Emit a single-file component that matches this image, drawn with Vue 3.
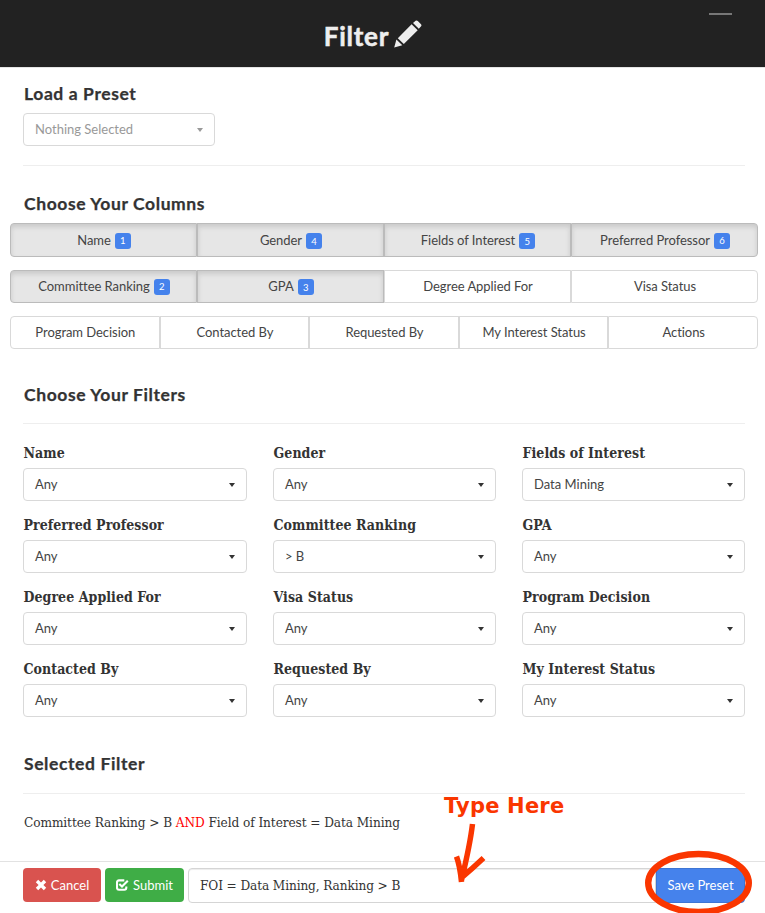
<script setup>
const rows = [
  [
    { label: 'Name', order: 1 },
    { label: 'Gender', order: 4 },
    { label: 'Fields of Interest', order: 5 },
    { label: 'Preferred Professor', order: 6 },
  ],
  [
    { label: 'Committee Ranking', order: 2 },
    { label: 'GPA', order: 3 },
    { label: 'Degree Applied For' },
    { label: 'Visa Status' },
  ],
  [
    { label: 'Program Decision' },
    { label: 'Contacted By' },
    { label: 'Requested By' },
    { label: 'My Interest Status' },
    { label: 'Actions' },
  ],
]
const filters = [
  ['Name', 'Any'], ['Gender', 'Any'], ['Fields of Interest', 'Data Mining'],
  ['Preferred Professor', 'Any'], ['Committee Ranking', '> B'], ['GPA', 'Any'],
  ['Degree Applied For', 'Any'], ['Visa Status', 'Any'], ['Program Decision', 'Any'],
  ['Contacted By', 'Any'], ['Requested By', 'Any'], ['My Interest Status', 'Any'],
]
</script>

<template>
  <div class="page">
    <header class="top">
      <h1>Filter</h1>
      <svg class="pencil" width="28" height="28" viewBox="0 0 28 28">
        <path d="M0.2 27.4 2.4 19.4 8.3 25.2ZM3.8 18.2 17.6 4.2 23.7 10.2 9.8 24ZM19 3.1 21.6 0.8Q22.8 0 23.8 1L27 4.3Q28 5.3 27.1 6.3L24.8 8.8Z" />
      </svg>
      <span class="minimize"></span>
    </header>

    <main>
      <section class="preset">
        <h4>Load a Preset</h4>
        <button class="select muted"><span>Nothing Selected</span><i class="caret"></i></button>
      </section>
      <hr>

      <h4 class="columns-title">Choose Your Columns</h4>
      <div class="groups">
        <div v-for="(row, i) in rows" :key="i" class="group" :class="{ first: i === 0 }">
          <button v-for="c in row" :key="c.label" :class="{ active: c.order }">
            <span>{{ c.label }}</span>
            <b v-if="c.order" :class="{ low: c.order > 2 && c.order < 6 }">{{ c.order }}</b>
          </button>
        </div>
      </div>

      <h4 class="filters-title">Choose Your Filters</h4>
      <hr>
      <div class="filters">
        <div v-for="f in filters" :key="f[0]" class="field">
          <label>{{ f[0] }}</label>
          <button class="select"><span>{{ f[1] }}</span><i class="caret"></i></button>
        </div>
      </div>

      <h4 class="selected-title">Selected Filter</h4>
      <hr>
      <p class="expression">Committee Ranking &gt; B <em>AND</em> Field of Interest = Data Mining</p>
    </main>

    <footer>
      <button class="btn cancel">
        <svg width="12" height="12" viewBox="0 0 12 12"><path d="M3.2.8 6 3.6 8.8.8 11.2 3.2 8.4 6 11.2 8.8 8.8 11.2 6 8.4 3.2 11.2.8 8.8 3.6 6 .8 3.2Z" /></svg>
        <span>Cancel</span>
      </button>
      <button class="btn submit">
        <svg width="13" height="12" viewBox="0 0 13 12"><path class="line" d="M8.3 1.4H3Q1 1.4 1 3.4V8.7Q1 10.7 3 10.7H8.3Q10.3 10.7 10.3 8.7V7.6M3.3 5 6 7.6 11.8 1.8" /></svg>
        <span>Submit</span>
      </button>
      <div class="name-input">FOI = Data Mining, Ranking &gt; B</div>
      <button class="btn save"><span>Save Preset</span></button>
    </footer>

    <div class="hint">Type Here</div>
    <svg class="marks" width="765" height="913" viewBox="0 0 765 913">
      <path d="M472.5 824Q470 845 461.5 880M456.5 856.5Q460 866 461.5 882M483.5 858Q472 869 461 878" />
      <ellipse cx="698.5" cy="883" rx="50.3" ry="29" />
    </svg>
  </div>
</template>

<style>
body { background: #fff; overflow: hidden; }
</style>

<style scoped>
* { box-sizing: border-box; }
.page { position: relative; width: 765px; height: 913px; overflow: hidden; background: #fff; color: #333; font-family: Lato, sans-serif; font-size: 13px; display: flex; flex-direction: column; }
.top { position: relative; flex: none; height: 68px; background: #222; border-bottom: 1px solid #e5e5e5; display: flex; justify-content: center; gap: 5px; padding-right: 19px; }
h1 { margin: 19px 0 0; font-size: 26px; line-height: 34px; font-weight: 700; color: #eee; letter-spacing: .75px; -webkit-text-stroke: .5px #eee; }
.pencil { margin-top: 20px; fill: #eee; }
.minimize { position: absolute; left: 709px; top: 13px; width: 23px; height: 2px; background: #777; }
main { flex: 1; padding: 0 20px 0 23px; }
h4 { margin: 0; font-size: 17.5px; line-height: 20px; font-weight: 700; letter-spacing: .6px; padding-left: 1px; -webkit-text-stroke: .25px #333; }
hr { border: 0; height: 1px; background: #eee; margin: 0; width: 722px; }
button { font-family: inherit; font-size: 13px; color: #444; margin: 0; padding: 0; background: #fff; }
.preset { padding-top: 16px; height: 97px; }
.preset .select { margin-top: 9px; width: 192px; }
.select { display: flex; align-items: center; justify-content: space-between; width: 100%; height: 33px; border: 1px solid #d9d9d9; border-radius: 4px; padding: 0 11px 1px; letter-spacing: 0; }
.select span { margin-top: -1px; }
.caret { width: 0; height: 0; margin-top: 1px; border: 3.5px solid transparent; border-top: 4px solid #333; border-bottom: 0; }
.muted { color: #999; }
.muted .caret { border-top-color: #999; }
.columns-title { margin-top: 28px; }
.groups { margin: 9px 0 0 -13px; width: 748px; display: flex; flex-direction: column; gap: 13px; }
.group { display: flex; height: 33px; }
.group.first { height: 34px; }
.group button { flex: 1 1 0; border: 1px solid #d9d9d9; display: flex; justify-content: center; align-items: center; gap: 4px; padding: 0 0 2px 1px; letter-spacing: -.05px; }
.group.first button { padding-bottom: 0; }
.group button:first-child { border-radius: 4px 0 0 4px; }
.group button:last-child { border-radius: 0 4px 4px 0; }
.group .active { background: #e6e6e6; border-color: #bbb; box-shadow: inset 0 3px 5px rgba(0, 0, 0, .125); }
.group b { width: 16px; height: 16px; border-radius: 3px; background: #4582ec; color: #fff; font-size: 9.5px; font-weight: 400; line-height: 16px; text-align: center; margin-top: 1px; letter-spacing: 0; }
.group:nth-child(2) b { margin-top: 3px; }
.group b.low { line-height: 18px; }
.filters-title { margin-top: 36px; }
.filters-title + hr { margin-top: 18px; }
.selected-title + hr { margin-top: 19px; }
.filters { display: grid; grid-template-columns: 224px 223px 223px; column-gap: 26px; row-gap: 14px; margin-top: 19px; }
.field label { display: block; height: 25px; line-height: 20px; padding-left: .5px; font-family: "DejaVu Serif Condensed", "DejaVu Serif", serif; font-stretch: condensed; font-size: 14px; letter-spacing: .06px; font-weight: 700; }
.selected-title { margin-top: 37px; }
.expression { margin: 18px 0 0; padding-left: 1px; font-family: "DejaVu Serif Condensed", "DejaVu Serif", serif; font-stretch: condensed; font-size: 13.5px; letter-spacing: -.08px; line-height: 20px; white-space: nowrap; }
.expression em { font-style: normal; color: #f00; }
footer { flex: none; height: 52px; border-top: 1px solid #e2e2e2; padding: 6px 20px 0 23px; display: flex; }
.btn { height: 34px; border: 0; border-radius: 4px; color: #fff; display: flex; justify-content: center; align-items: center; gap: 4px; padding-bottom: 1px; }
.btn svg { fill: #fff; }
.btn .line { fill: none; stroke: #fff; stroke-width: 2.1; }
.cancel { width: 78px; background: #d9534f; margin-right: 4px; }
.submit { width: 79px; background: #3fad46; margin-right: 4px; }
.name-input { width: 468px; height: 35px; border: 1px solid #d5d5d5; box-shadow: inset 0 1px 1px rgba(0, 0, 0, .075); border-radius: 4px 0 0 4px; padding-left: 11px; font-family: "DejaVu Serif Condensed", "DejaVu Serif", serif; font-stretch: condensed; font-size: 13.5px; letter-spacing: -.11px; line-height: 33px; }
.save { width: 89px; height: 35px; background: #4582ec; border: 1px solid #3d75d4; border-radius: 0 4px 4px 0; }
.hint { position: absolute; left: 444px; top: 793px; color: #fa3600; font: 700 21px/26px "DejaVu Sans", sans-serif; letter-spacing: .2px; white-space: nowrap; }
.marks { position: absolute; left: 0; top: 0; fill: none; stroke: #fa3600; stroke-width: 5.5; pointer-events: none; }
.marks ellipse { stroke-width: 6.4; }
</style>
